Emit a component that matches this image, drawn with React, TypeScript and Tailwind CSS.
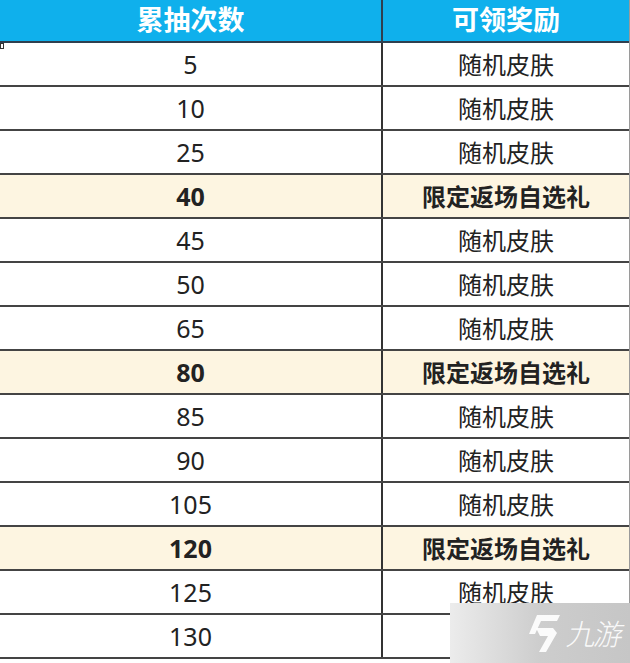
const rows: { n: string; reward: string; hot?: boolean }[] = [
  { n: "5", reward: "随机皮肤" },
  { n: "10", reward: "随机皮肤" },
  { n: "25", reward: "随机皮肤" },
  { n: "40", reward: "限定返场自选礼", hot: true },
  { n: "45", reward: "随机皮肤" },
  { n: "50", reward: "随机皮肤" },
  { n: "65", reward: "随机皮肤" },
  { n: "80", reward: "限定返场自选礼", hot: true },
  { n: "85", reward: "随机皮肤" },
  { n: "90", reward: "随机皮肤" },
  { n: "105", reward: "随机皮肤" },
  { n: "120", reward: "限定返场自选礼", hot: true },
  { n: "125", reward: "随机皮肤" },
  { n: "130", reward: "随机皮肤" },
]

const font = { fontFamily: '"Noto Sans", "Noto Sans CJK SC", sans-serif' }

const App = () => {
  return (
    <div className="relative w-[630px] h-[663px] overflow-hidden bg-white" style={font}>
      <div className="w-[630px] border-r border-[#9a9a9a]">
        <div className="grid grid-cols-[383px_1fr] h-[43px] bg-[#0fb0ec] border-b-2 border-[#2f3f4f]">
          <div className="flex items-center justify-center border-r-2 border-[#2f3f4f] text-white text-[27px] font-bold">
            累抽次数
          </div>
          <div className="flex items-center justify-center text-white text-[27px] font-bold">
            可领奖励
          </div>
        </div>

        {rows.map((r, i) => (
          <div
            key={i}
            className={`grid grid-cols-[383px_1fr] h-[44px] border-b-2 border-[#444] ${r.hot ? "bg-[#fdf5e1]" : "bg-white"}`}
          >
            <div
              className={`relative flex items-center justify-center pt-[2px] border-r-2 border-[#333] text-[25px] text-[#222] ${r.hot ? "font-bold" : ""}`}
            >
              {i === 0 && <span className="absolute left-0 top-0 w-[4px] h-[6px] border border-[#333] bg-white" />}
              {r.n}
            </div>
            <div className={`flex items-center justify-center pt-[2px] text-[24px] text-[#222] ${r.hot ? "font-bold" : ""}`}>
              {r.reward}
            </div>
          </div>
        ))}
      </div>

      <div className="absolute right-0 bottom-0 w-[180px] h-[60px] bg-gradient-to-r from-[#ececec] via-[#cdcdcd] to-[#c6c6c6] flex items-center justify-end pr-[8px] gap-[6px]">
        <svg width="40" height="40" viewBox="0 0 40 40">
          <path d="M15 2 L38 2 L35 8 L19 8 L13 21 L7 21 Z" fill="#fff" opacity="0.92" />
          <path d="M14 15 L31 15 L35 20 L24 39 L17 39 L26 23 L18 23 Z" fill="#fff" opacity="0.92" />
        </svg>
        <span className="text-white text-[29px] leading-none font-light tracking-[-2px] opacity-90 -skew-x-12">九游</span>
      </div>
    </div>
  )
}

export default App
